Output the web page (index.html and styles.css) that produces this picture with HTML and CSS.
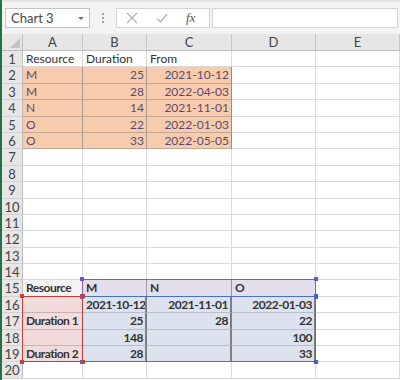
FILE: index.html
```html
<!DOCTYPE html>
<html lang="en">
<head>
    <meta charset="UTF-8">
    <meta name="viewport" content="width=device-width, initial-scale=1.0">
    <title>Chart 3</title>
    <link rel="stylesheet" href="styles.css">
</head>
<body>
    <div class="app">
        <div class="toolbar">
            <div class="name-box">
                <span>Chart 3</span>
                <span class="caret"></span>
            </div>
            <div class="grip"><i></i><i></i><i></i></div>
            <div class="fx-box">
                <svg class="tool" width="12" height="12" viewBox="0 0 12 12"><path d="M1 1 L11 11 M11 1 L1 11" stroke="#b4b4b4" stroke-width="1.2" fill="none"/></svg>
                <svg class="tool" width="12" height="12" viewBox="0 0 12 12"><path d="M1 6.5 L4.5 10 L11 2" stroke="#b4b4b4" stroke-width="1.4" fill="none"/></svg>
                <span class="fx">fx</span>
            </div>
            <div class="formula"></div>
        </div>

        <div class="sheet-wrap">
            <div class="sheet">
                <!-- column headers -->
                <div class="corner"></div>
                <div class="col-head">A</div>
                <div class="col-head">B</div>
                <div class="col-head">C</div>
                <div class="col-head">D</div>
                <div class="col-head">E</div>

                <!-- source data -->
                <div class="row-head">1</div>
                <div class="cell">Resource</div>
                <div class="cell">Duration</div>
                <div class="cell">From</div>
                <div class="cell"></div>
                <div class="cell"></div>

                <div class="row-head">2</div>
                <div class="cell src">M</div>
                <div class="cell src num">25</div>
                <div class="cell src num last">2021-10-12</div>
                <div class="cell"></div>
                <div class="cell"></div>

                <div class="row-head">3</div>
                <div class="cell src">M</div>
                <div class="cell src num">28</div>
                <div class="cell src num last">2022-04-03</div>
                <div class="cell"></div>
                <div class="cell"></div>

                <div class="row-head">4</div>
                <div class="cell src">N</div>
                <div class="cell src num">14</div>
                <div class="cell src num last">2021-11-01</div>
                <div class="cell"></div>
                <div class="cell"></div>

                <div class="row-head">5</div>
                <div class="cell src">O</div>
                <div class="cell src num">22</div>
                <div class="cell src num last">2022-01-03</div>
                <div class="cell"></div>
                <div class="cell"></div>

                <div class="row-head">6</div>
                <div class="cell src">O</div>
                <div class="cell src num">33</div>
                <div class="cell src num last">2022-05-05</div>
                <div class="cell"></div>
                <div class="cell"></div>

                <!-- empty rows -->
                <div class="row-head">7</div>
                <div class="cell"></div><div class="cell"></div><div class="cell"></div><div class="cell"></div><div class="cell"></div>
                <div class="row-head">8</div>
                <div class="cell"></div><div class="cell"></div><div class="cell"></div><div class="cell"></div><div class="cell"></div>
                <div class="row-head">9</div>
                <div class="cell"></div><div class="cell"></div><div class="cell"></div><div class="cell"></div><div class="cell"></div>
                <div class="row-head">10</div>
                <div class="cell"></div><div class="cell"></div><div class="cell"></div><div class="cell"></div><div class="cell"></div>
                <div class="row-head">11</div>
                <div class="cell"></div><div class="cell"></div><div class="cell"></div><div class="cell"></div><div class="cell"></div>
                <div class="row-head">12</div>
                <div class="cell"></div><div class="cell"></div><div class="cell"></div><div class="cell"></div><div class="cell"></div>
                <div class="row-head">13</div>
                <div class="cell"></div><div class="cell"></div><div class="cell"></div><div class="cell"></div><div class="cell"></div>
                <div class="row-head">14</div>
                <div class="cell"></div><div class="cell"></div><div class="cell"></div><div class="cell"></div><div class="cell"></div>

                <!-- chart table -->
                <div class="row-head">15</div>
                <div class="cell bold corner-cell">Resource</div>
                <div class="cell bold series">M</div>
                <div class="cell bold series">N</div>
                <div class="cell bold series">O</div>
                <div class="cell"></div>

                <div class="row-head">16</div>
                <div class="cell bold label"></div>
                <div class="cell bold vals num">2021-10-12</div>
                <div class="cell bold vals num">2021-11-01</div>
                <div class="cell bold vals num">2022-01-03</div>
                <div class="cell"></div>

                <div class="row-head">17</div>
                <div class="cell bold label">Duration 1</div>
                <div class="cell bold vals num">25</div>
                <div class="cell bold vals num">28</div>
                <div class="cell bold vals num">22</div>
                <div class="cell"></div>

                <div class="row-head">18</div>
                <div class="cell bold label"></div>
                <div class="cell bold vals num">148</div>
                <div class="cell bold vals num"></div>
                <div class="cell bold vals num">100</div>
                <div class="cell"></div>

                <div class="row-head">19</div>
                <div class="cell bold label">Duration 2</div>
                <div class="cell bold vals num">28</div>
                <div class="cell bold vals num"></div>
                <div class="cell bold vals num">33</div>
                <div class="cell"></div>

                <div class="row-head">20</div>
                <div class="cell"></div><div class="cell"></div><div class="cell"></div><div class="cell"></div><div class="cell"></div>
            </div>

            <!-- chart range highlights, laid over the cells on the same tracks -->
            <div class="sheet overlay">
                <div class="range range-series">
                    <i class="h tl"></i><i class="h tr"></i><i class="h bl"></i><i class="h br"></i>
                </div>
                <div class="range range-values">
                    <i class="h tl"></i><i class="h tr"></i><i class="h bl"></i><i class="h br"></i>
                </div>
                <div class="range range-labels">
                    <i class="h tl"></i><i class="h tr"></i><i class="h bl"></i><i class="h br"></i>
                </div>
            </div>
        </div>
    </div>
</body>
</html>
```

FILE: styles.css
```css
* {
  box-sizing: border-box;
}

body {
  margin: 0;
  width: 400px;
  height: 380px;
  overflow: hidden;
  font-family: Lato, "Liberation Sans", sans-serif;
  background: #fff;
}

.app {
  border-left: 2px solid #217346;
  height: 380px;
}

/* toolbar */
.toolbar {
  height: 34px;
  background: #f3f3f3;
  border-top: 2px solid #e4e4e4;
  display: flex;
  align-items: center;
  padding: 0 0 0 3px;
}

.name-box {
  width: 85px;
  height: 20px;
  background: #fff;
  border: 1px solid #c6c6c6;
  display: flex;
  align-items: center;
  justify-content: space-between;
  padding: 0 5px 0 5px;
  font-size: 13px;
  color: #444;
}

.caret {
  width: 0;
  height: 0;
  border-left: 3px solid transparent;
  border-right: 3px solid transparent;
  border-top: 3px solid #777;
}

.grip {
  width: 26px;
  display: flex;
  flex-direction: column;
  align-items: center;
  gap: 2px;
}

.grip i {
  width: 2px;
  height: 2px;
  background: #a0a0a0;
}

.fx-box {
  width: 94px;
  height: 20px;
  background: #fff;
  border: 1px solid #d4d4d4;
  display: flex;
  align-items: center;
  padding: 0 0 0 9px;
  gap: 18px;
}

.fx {
  font-family: "Liberation Serif", serif;
  font-style: italic;
  font-size: 13px;
  color: #555;
}

.formula {
  flex: 1;
  height: 20px;
  margin-left: 2px;
  margin-right: 2px;
  background: #fff;
  border: 1px solid #d4d4d4;
}

/* sheet */
.sheet-wrap {
  position: relative;
}

.sheet {
  display: grid;
  grid-template-columns: 21px 60px 64px 85px 84px 1fr;
  grid-template-rows: 17px repeat(20, 16.4px);
  font-size: 12px;
  color: #333;
}

.overlay {
  position: absolute;
  inset: 0;
  pointer-events: none;
}

.corner,
.col-head,
.row-head {
  background: #e6e6e6;
  color: #444;
  font-size: 13px;
}

.corner {
  border-right: 1px solid #bdbdbd;
  border-bottom: 1px solid #bdbdbd;
  position: relative;
}

.corner::after {
  content: "";
  position: absolute;
  right: 2px;
  bottom: 2px;
  width: 10px;
  height: 10px;
  background: #c4c4c4;
  clip-path: polygon(100% 0, 100% 100%, 0 100%);
}

.col-head {
  text-align: center;
  line-height: 16px;
  border-right: 1px solid #c6c6c6;
  border-bottom: 1px solid #bdbdbd;
}

.row-head {
  text-align: center;
  line-height: 16px;
  border-right: 1px solid #bdbdbd;
  border-bottom: 1px solid #d2d2d2;
}

.cell {
  border-right: 1px solid #dadada;
  border-bottom: 1px solid #dadada;
  padding: 0 2px 0 3px;
  line-height: 15px;
  white-space: nowrap;
  overflow: hidden;
}

.num {
  text-align: right;
}

.bold {
  font-weight: bold;
  letter-spacing: -0.5px;
}

.src {
  background: #f8cbad;
  color: #5c4a6e;
  border-right-color: #a9998e;
  border-bottom-color: #bfa896;
}

.src.last {
  border-right-color: #8e8e8e;
}

.corner-cell {
  background: #f4f4f4;
}

.series {
  background: #e4dfec;
  border-right-color: #9a93a6;
}

.label {
  background: #f2dcdb;
  border-bottom-color: #c9b3b2;
}

.vals {
  background: #dce3ee;
  border-right: 2px solid #7f7f7f;
  border-bottom-color: #b8bfca;
}

/* chart ranges drawn over the cells */
.range {
  position: relative;
  margin: -1px 0 0 -1px;
}

.range-series {
  grid-row: 16;
  grid-column: 3 / 6;
  border: 1px solid #8058c8;
}

.range-labels {
  grid-row: 17 / 21;
  grid-column: 2;
  border: 1px solid #d03a3a;
}

.range-values {
  grid-row: 17 / 21;
  grid-column: 3 / 6;
  border: 1px solid #4472c4;
}

.h {
  position: absolute;
  width: 4px;
  height: 4px;
}

.range-series .h { background: #7a4fc4; }
.range-labels .h { background: #d03a3a; }
.range-values .h { background: #3a68c0; }

.tl { left: -3px; top: -3px; }
.tr { right: -3px; top: -3px; }
.bl { left: -3px; bottom: -3px; }
.br { right: -3px; bottom: -3px; }
```
